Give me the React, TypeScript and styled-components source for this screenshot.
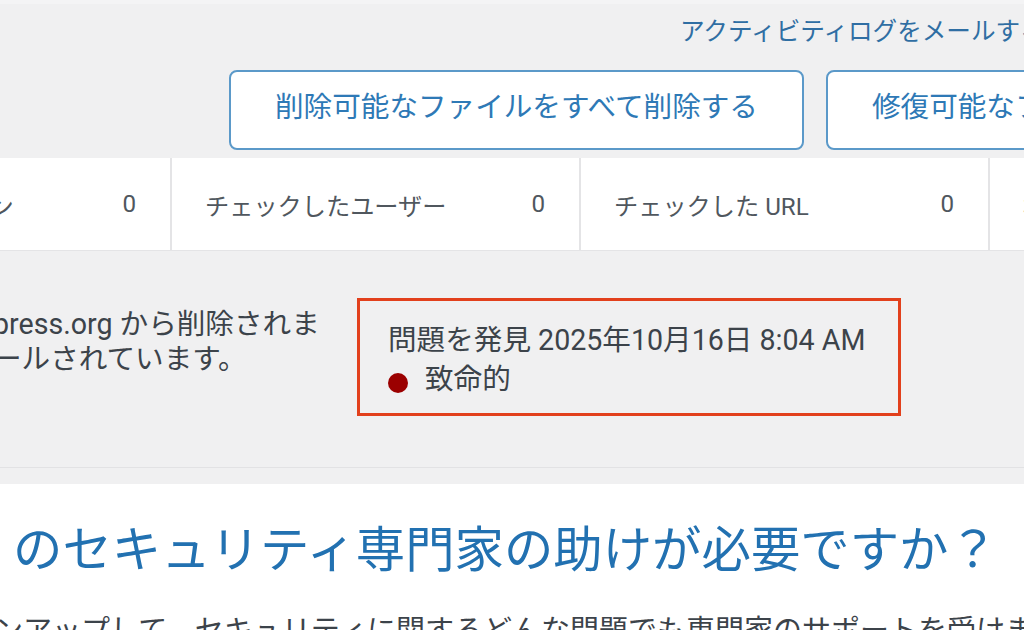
import React from 'react'
import styled, { createGlobalStyle } from 'styled-components'

const GlobalStyle = createGlobalStyle`
    html, body {
        margin: 0;
        padding: 0;
        width: 1024px;
        height: 630px;
        overflow: hidden;
        background: #f0f0f1;
    }
    body {
        font-family: Roboto, "Noto Sans CJK JP", sans-serif;
        color: #3c434a;
    }
`

const Page = styled.div`
    width: 1024px;
    height: 630px;
    overflow: hidden;
    background: #f0f0f1;
    border-top: 4px solid #f4f4f5;
    box-sizing: border-box;
`

const LinkRow = styled.div`
    display: flex;
    padding: 11px 0 0 680px;
    white-space: nowrap;
`

const MailLink = styled.a`
    font-size: 24.6px;
    line-height: 34px;
    color: #2f6ea3;
    text-decoration: none;
`

const ButtonRow = styled.div`
    display: flex;
    gap: 22px;
    margin-top: 21px;
    padding-left: 229px;
`

const Button = styled.button`
    flex: none;
    height: 80px;
    padding: 0 44px 7px;
    box-sizing: border-box;
    background: #fff;
    border: 2px solid #5b99c9;
    border-radius: 8px;
    color: #2e79b6;
    font-family: Roboto, "Noto Sans CJK JP", sans-serif;
    font-size: 28.6px;
    line-height: 40px;
    white-space: nowrap;
`

const StatsGrid = styled.div`
    display: grid;
    grid-template-columns: repeat(5, 407px);
    gap: 2px;
    margin: 8px 0 0 -237px;
    background: #e4e4e6;
    padding-bottom: 1px;
`

const StatCell = styled.div`
    display: flex;
    align-items: center;
    justify-content: space-between;
    height: 92px;
    padding: 0 34px 0 33px;
    background: #fff;
    font-size: 24.2px;
    color: #50575e;
    white-space: nowrap;
`

const IssueRow = styled.div`
    display: flex;
    align-items: flex-start;
    gap: 44px;
    padding: 47px 0 51px;
    border-bottom: 1px solid #e2e2e4;
`

const Description = styled.p`
    flex: none;
    width: 320px;
    margin: 9px 0 0 -7px;
    font-size: 28.6px;
    line-height: 35px;
    white-space: nowrap;
`

const IssueBox = styled.div`
    flex: none;
    width: 544px;
    box-sizing: border-box;
    padding: 20px 28px 14px;
    border: 3px solid #e2401c;
`

const IssueLine = styled.div`
    display: flex;
    align-items: center;
    font-size: 28.6px;
    line-height: 39px;
    white-space: nowrap;
`

const SeverityDot = styled.span<{ color: string }>`
    flex: none;
    width: 20px;
    height: 20px;
    margin: 6px 17px 0 0;
    border-radius: 50%;
    background: ${p => p.color};
`

const HelpSection = styled.section`
    margin-top: 16px;
    padding-top: 35px;
    height: 200px;
    background: #fff;
`

const HelpTitle = styled.h2`
    margin: 0;
    padding-left: 13px;
    font-size: 49.4px;
    font-weight: 400;
    line-height: 62px;
    color: #2271b1;
    white-space: nowrap;
`

const HelpText = styled.p`
    margin: 30px 0 0 -6px;
    font-size: 29px;
    line-height: 40px;
    white-space: nowrap;
`

const stats = [
    { label: 'テーマとプラグイン', value: 0 },
    { label: 'チェックしたユーザー', value: 0 },
    { label: 'チェックした URL', value: 0 },
    { label: '検出された結果', value: 1 },
    { label: '', value: '' },
]

const App: React.FC = () => (
    <>
        <GlobalStyle />
        <Page>
            <LinkRow>
                <MailLink href="#">アクティビティログをメールする</MailLink>
            </LinkRow>
            <ButtonRow>
                <Button>削除可能なファイルをすべて削除する</Button>
                <Button>修復可能なファイルをすべて修復する</Button>
            </ButtonRow>
            <StatsGrid>
                {stats.map((s, i) => (
                    <StatCell key={i}>
                        <span>{s.label}</span>
                        <span>{s.value}</span>
                    </StatCell>
                ))}
            </StatsGrid>
            <IssueRow>
                <Description>
                    press.org から削除されま
                    <br />
                    ールされています。
                </Description>
                <IssueBox>
                    <IssueLine>問題を発見 2025年10月16日 8:04 AM</IssueLine>
                    <IssueLine>
                        <SeverityDot color="#9b0000" />
                        致命的
                    </IssueLine>
                </IssueBox>
            </IssueRow>
            <HelpSection>
                <HelpTitle>のセキュリティ専門家の助けが必要ですか？</HelpTitle>
                <HelpText>ンアップして、セキュリティに関するどんな問題でも専門家のサポートを受けま</HelpText>
            </HelpSection>
        </Page>
    </>
)

export default App
